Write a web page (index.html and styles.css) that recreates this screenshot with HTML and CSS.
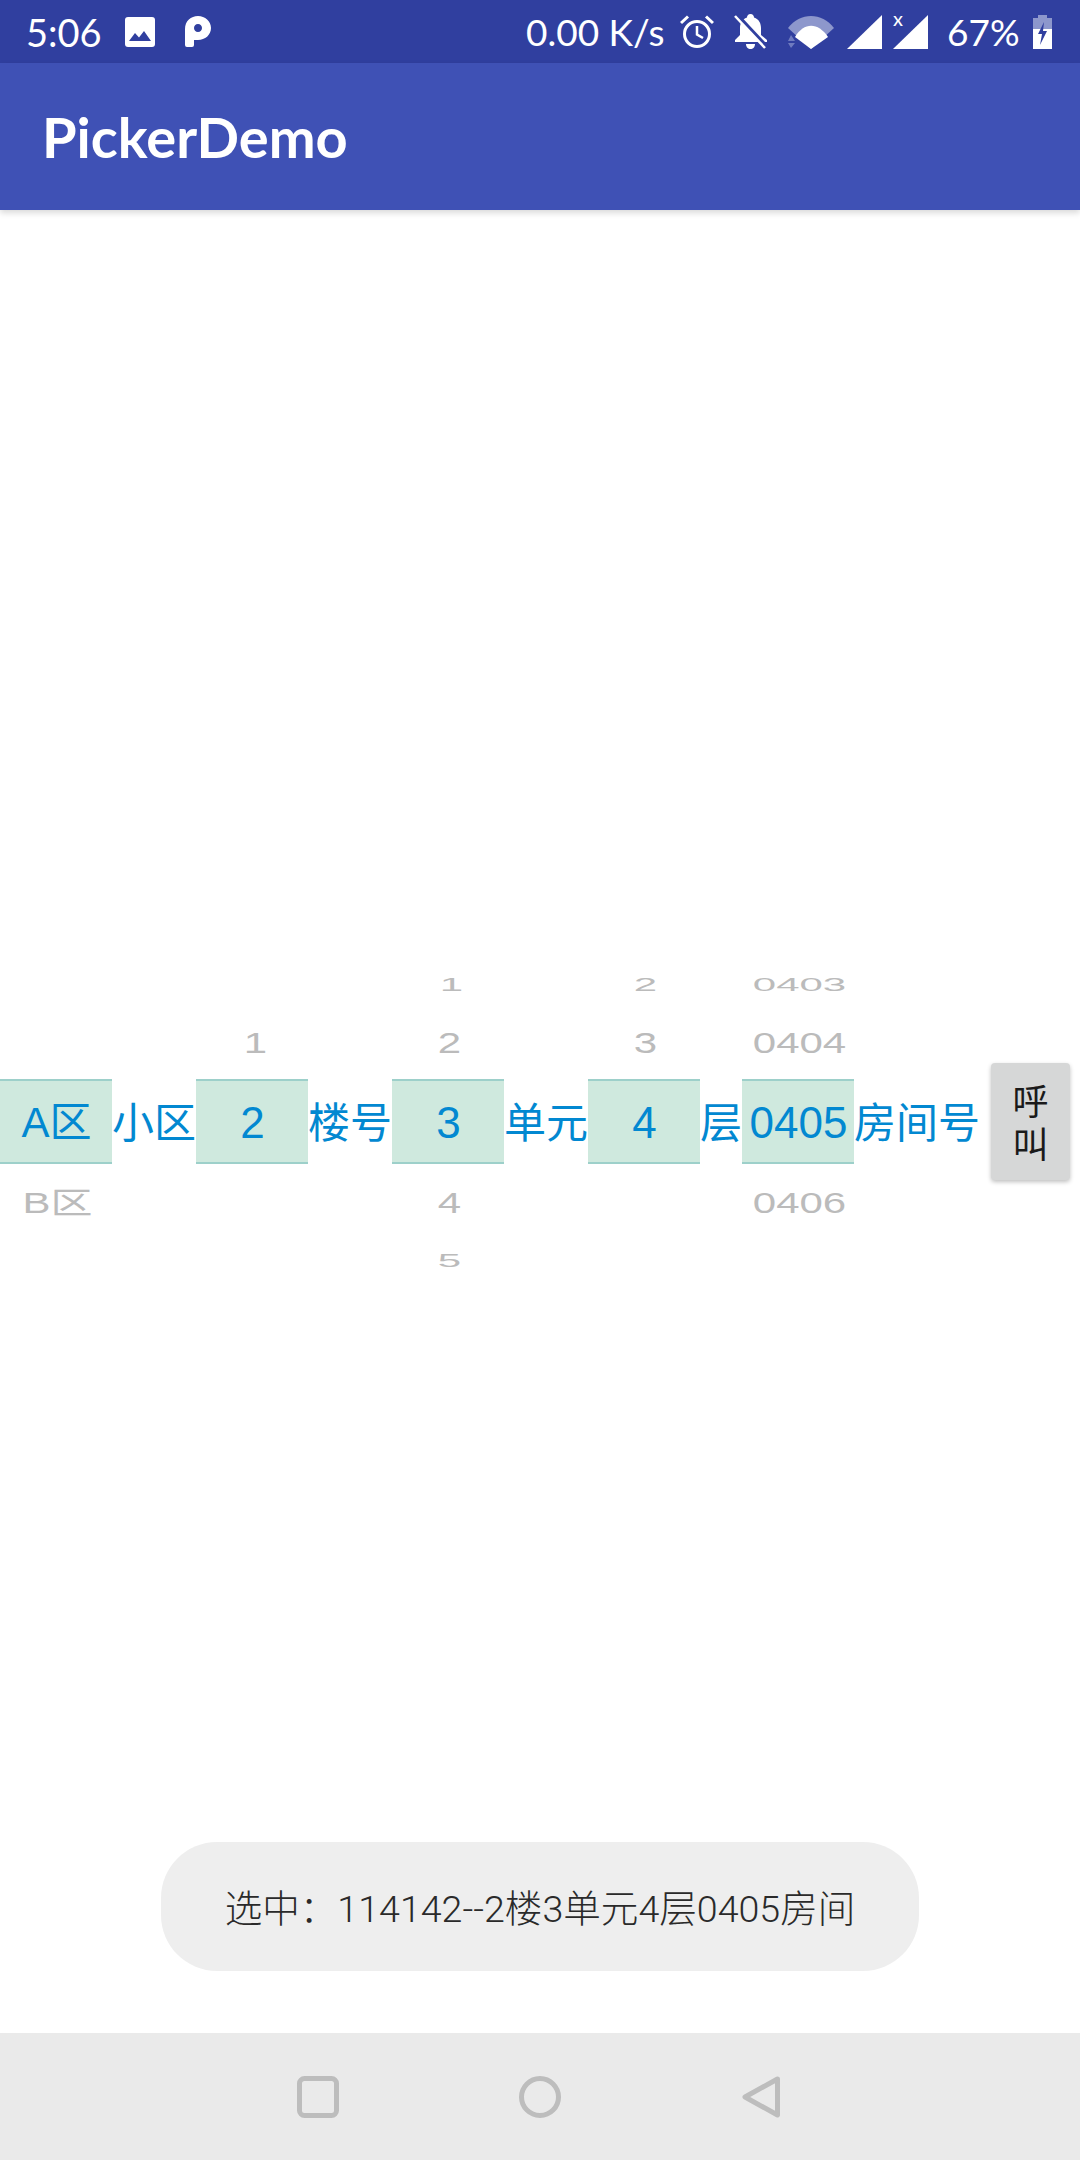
FILE: index.html
```html
<!DOCTYPE html>
<html lang="zh">

<head>
  <meta charset="UTF-8">
  <title>PickerDemo</title>
  <link rel="stylesheet" href="styles.css">
</head>

<body>
  <div class="status-bar">
    <span class="clock">5:06</span>
    <svg class="icon-image" width="30" height="30" viewBox="0 0 30 30">
      <rect width="30" height="30" rx="3" fill="#fff"/>
      <path d="M4 24L10 16L14 20.5L19 14L26 24Z" fill="#303f9f"/>
    </svg>
    <svg class="icon-p" width="26" height="31" viewBox="0 0 26 31">
      <path fill-rule="evenodd" fill="#fff" d="M0 13C0 5 6 0 13 0C20 0 26 5 26 12C26 19 20 24 13 24H9V29Q9 31 7 31H2Q0 31 0 29ZM13 8C10.500 8 9 10 9 12C9 14 10.500 16 13 16C15.500 16 17 14 17 12C17 10 15.500 8 13 8Z"/>
    </svg>
    <span class="net-speed">0.00 K/s</span>
    <svg class="icon-alarm" width="34" height="34" viewBox="0 0 34 34">
      <circle cx="17" cy="19" r="12.500" fill="none" stroke="#fff" stroke-width="3"/>
      <path d="M17 11V19.500L23 23" fill="none" stroke="#fff" stroke-width="2.500"/>
      <path d="M1 8L8 1.500M33 8L26 1.500" fill="none" stroke="#fff" stroke-width="3"/>
    </svg>
    <svg class="icon-bell" width="37" height="35" viewBox="0 0 37 35">
      <path d="M18.500 0C21 0 22 2 22 3.500C27 5 29 9.500 29 14V21L35 26V28H3V26L8 21V14C8 9.500 10 5 15 3.500C15 2 16 0 18.500 0Z" fill="#fff"/>
      <path d="M14 30H23C23 33 21 35 18.500 35C16 35 14 33 14 30Z" fill="#fff"/>
      <path d="M4 0L35 33" stroke="#303f9f" stroke-width="4"/>
      <path d="M3 2L33 34" stroke="#fff" stroke-width="2.500"/>
    </svg>
    <svg class="icon-wifi" width="48" height="34" viewBox="0 0 48 34">
      <path d="M1 13C13 -3 35 -3 47 13L24 34Z" fill="#8d97cc"/>
      <path d="M8 22C17 7 31 7 41 22L24 34Z" fill="#fff"/>
      <path d="M4 20L8 26H1ZM1 28H8L4 33Z" fill="#6f7bbf"/>
    </svg>
    <svg class="icon-signal" width="35" height="34" viewBox="0 0 35 34">
      <path d="M35 0V34H0Z" fill="#fff"/>
    </svg>
    <span class="sim-x">x</span>
    <svg class="icon-signal-two" width="35" height="34" viewBox="0 0 35 34">
      <path d="M35 0V34H0Z" fill="#fff"/>
    </svg>
    <span class="battery-text">67%</span>
    <svg class="icon-battery" width="19" height="34" viewBox="0 0 19 34">
      <path d="M5 0H14V3H19V14H0V3H5Z" fill="#8d97cc"/>
      <path d="M0 14H19V34H0Z" fill="#fff"/>
      <path d="M11 7L5 19H9L7 30L14 16H10Z" fill="#303f9f"/>
    </svg>
  </div>

  <header class="app-bar">PickerDemo</header>

  <main class="content">
    <div class="picker-row">
      <div class="wheel">
        <div class="item far"></div>
        <div class="item near"></div>
        <div class="item selected">A区</div>
        <div class="item near-low"><span>B区</span></div>
        <div class="item far-low"></div>
      </div>
      <span class="unit two">小区</span>
      <div class="wheel">
        <div class="item far"></div>
        <div class="item near"><span class="nudge">1</span></div>
        <div class="item selected digits">2</div>
        <div class="item near-low"></div>
        <div class="item far-low"></div>
      </div>
      <span class="unit two">楼号</span>
      <div class="wheel">
        <div class="item far"><span class="nudge">1</span></div>
        <div class="item near"><span>2</span></div>
        <div class="item selected digits">3</div>
        <div class="item near-low"><span>4</span></div>
        <div class="item far-low"><span>5</span></div>
      </div>
      <span class="unit two">单元</span>
      <div class="wheel">
        <div class="item far"><span>2</span></div>
        <div class="item near"><span>3</span></div>
        <div class="item selected digits">4</div>
        <div class="item near-low"></div>
        <div class="item far-low"></div>
      </div>
      <span class="unit one">层</span>
      <div class="wheel">
        <div class="item far"><span>0403</span></div>
        <div class="item near"><span>0404</span></div>
        <div class="item selected digits">0405</div>
        <div class="item near-low"><span>0406</span></div>
        <div class="item far-low"></div>
      </div>
      <span class="unit three">房间号</span>
      <button class="call-btn">呼叫</button>
    </div>

    <div class="toast">选中：114142--2楼3单元4层0405房间</div>
  </main>

  <div class="nav-bar">
    <svg width="42" height="42" viewBox="0 0 42 42">
      <rect x="2.500" y="2.500" width="37" height="37" rx="5" fill="none" stroke="#bdbdbd" stroke-width="5"/>
    </svg>
    <svg width="42" height="42" viewBox="0 0 42 42">
      <circle cx="21" cy="21" r="18.500" fill="none" stroke="#bdbdbd" stroke-width="5"/>
    </svg>
    <svg width="42" height="42" viewBox="0 0 42 42">
      <path d="M36.500 3L4 21L36.500 39Z" fill="none" stroke="#bdbdbd" stroke-width="5" stroke-linejoin="round"/>
    </svg>
  </div>
</body>

</html>
```

FILE: styles.css
```css
body {
  margin: 0;
  width: 1080px;
  height: 2160px;
  display: flex;
  flex-direction: column;
  background-color: #ffffff;
  font-family: "Liberation Sans", "Noto Sans CJK SC", sans-serif;
  overflow: hidden;
}

/* status bar */
.status-bar {
  height: 63px;
  flex-shrink: 0;
  display: flex;
  align-items: center;
  background-color: #303f9f;
  color: #ffffff;
  font-family: Lato, sans-serif;
  font-size: 37px;
  padding-left: 26px;
  box-sizing: border-box;
}

.clock {
  width: 99px;
  font-size: 38px;
}

.icon-p {
  margin-left: 30px;
}

.net-speed {
  margin-left: auto;
  width: 154px;
}

.icon-bell {
  margin-left: 18px;
}

.icon-wifi {
  margin-left: 18px;
}

.icon-signal {
  margin-left: 12px;
}

.sim-x {
  width: 0;
  font-size: 20px;
  margin-left: 11px;
  align-self: flex-start;
  margin-top: 6px;
}

.icon-signal-two {
  margin-left: 0;
}

.battery-text {
  margin-left: 19px;
  width: 86px;
}

.icon-battery {
  margin-right: 28px;
}

/* app bar */
.app-bar {
  height: 147px;
  flex-shrink: 0;
  display: flex;
  align-items: center;
  padding-left: 42px;
  background-color: #3f51b5;
  color: #ffffff;
  font-family: Lato, sans-serif;
  font-weight: 700;
  font-size: 56px;
  box-shadow: 0 3px 6px rgba(0, 0, 0, 0.15);
  position: relative;
}

/* picker area */
.content {
  flex: 1;
  position: relative;
  display: flex;
  align-items: center;
}

.picker-row {
  width: 100%;
  display: flex;
  align-items: center;
  font-size: 42px;
  line-height: 50px;
  color: #0288d1;
}

.wheel {
  width: 112px;
  display: flex;
  flex-direction: column;
}

.item {
  box-sizing: border-box;
  padding-top: 2px;
  display: flex;
  align-items: center;
  justify-content: center;
  white-space: nowrap;
  color: #bbbbbb;
}

.item span {
  display: block;
  margin-left: 3px;
}

.item .nudge {
  margin-left: 7px;
}

.far {
  height: 41px;
}

.far span {
  transform: scaleY(0.43);
}

.near {
  height: 75px;
}

.near span {
  transform: scaleY(0.7);
}

.selected {
  height: 85px;
  padding-top: 3px;
  padding-left: 1px;
  background-color: #cfe9de;
  border-top: 2px solid #9dd0ca;
  border-bottom: 2px solid #9dd0ca;
  color: #0288d1;
}

.selected.digits {
  font-size: 44px;
}

.near-low {
  height: 75px;
}

.near-low span {
  transform: scaleY(0.7);
}

.far-low {
  height: 41px;
}

.far-low span {
  transform: scaleY(0.43);
}

.unit {
  padding-top: 4px;
  text-align: center;
}

.unit.one {
  width: 42px;
}

.unit.two {
  width: 84px;
}

.unit.three {
  width: 126px;
}

.call-btn {
  width: 79px;
  height: 117px;
  margin-left: auto;
  margin-right: 10px;
  padding: 4px 16px 0;
  border: none;
  border-radius: 4px;
  background-color: #d6d7d7;
  color: #1a1a1a;
  font-family: "Liberation Sans", "Noto Sans CJK SC", sans-serif;
  font-size: 36px;
  line-height: 43px;
  box-shadow: 0 2px 4px rgba(0, 0, 0, 0.25);
}

/* toast */
.toast {
  position: absolute;
  left: 161px;
  bottom: 62px;
  width: 758px;
  height: 129px;
  padding-bottom: 2px;
  box-sizing: border-box;
  display: flex;
  align-items: center;
  justify-content: center;
  border-radius: 56px;
  background-color: #eeeeee;
  color: #2a2a2a;
  font-family: Roboto, "Noto Sans CJK SC", sans-serif;
  font-size: 37.6px;
  font-weight: 300;
}

/* nav bar */
.nav-bar {
  height: 127px;
  flex-shrink: 0;
  display: flex;
  align-items: center;
  justify-content: center;
  gap: 180px;
  background-color: #eaeaea;
}
```
